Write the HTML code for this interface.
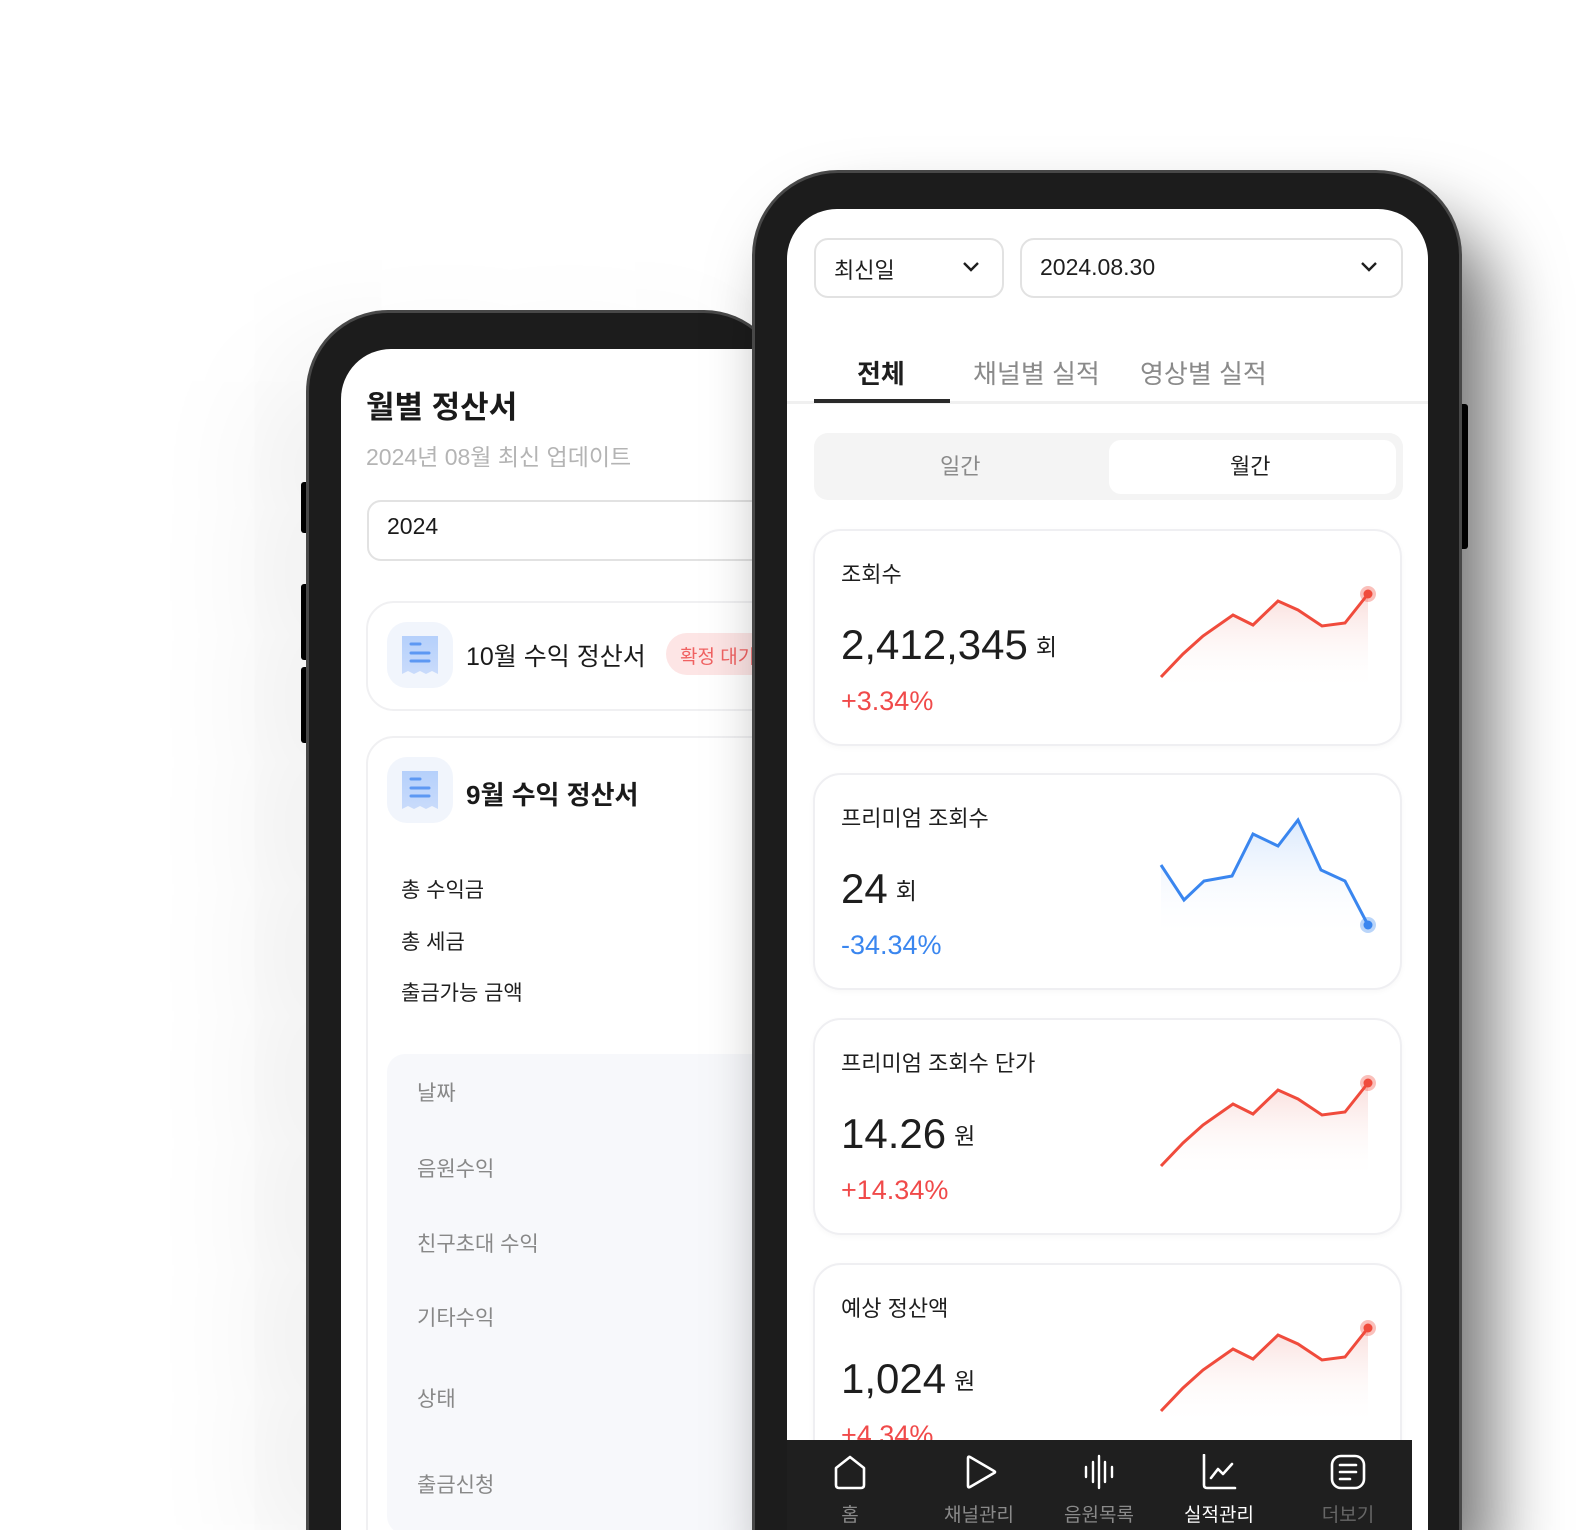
<!DOCTYPE html>
<html><head><meta charset="utf-8"><style>
*{box-sizing:border-box;margin:0;padding:0}
html{width:1585px;height:1530px;overflow:hidden}
body{width:1585px;height:1530px;overflow:hidden;background:#fff;position:relative;font-family:"Liberation Sans","Noto Sans CJK KR",sans-serif;color:#1e1e1e}
.abs{position:absolute}
.frame{position:absolute;background:#1c1c1c;border:3px solid #484848;border-bottom:0}
.scr{position:absolute;background:#fff;overflow:hidden}
.btn{position:absolute;background:#000;border-radius:3px}
.card{position:absolute;left:26px;width:589px;height:217px;border:2px solid #efeff2;border-radius:28px;background:#fff;box-shadow:0 2px 6px rgba(0,0,0,.03)}
.card .t{position:absolute;left:26px;top:26px;font-size:22px;color:#1e1e1e}
.card .v{position:absolute;left:26px;top:90px;font-size:42px;color:#1e1e1e;white-space:nowrap}
.card .v span{font-size:23px;margin-left:8px;vertical-align:4px}
.card .p{position:absolute;left:26px;top:155px;font-size:27px}
.card svg{position:absolute;left:0;top:0;overflow:visible}
.red{color:#f04a4a}.blue{color:#3a86ef}
.nav{position:absolute;top:1231px;left:0;width:625px;height:90px;background:#1f1f1f}
.ni{position:absolute;top:0;width:100px;text-align:center}
.ni svg{position:absolute;left:32px;top:14px}
.ni div{position:absolute;top:60px;width:100%;font-size:19px;color:#8a8a8a}
.lst{position:absolute;left:30px;font-size:21px;color:#888}
.clip{position:absolute;left:0;top:0;width:1585px;height:1530px;overflow:hidden}
</style></head><body><div class="clip">

<!-- LEFT PHONE -->
<div class="btn" style="left:301px;top:482px;width:8px;height:51px"></div>
<div class="btn" style="left:301px;top:584px;width:8px;height:76px"></div>
<div class="btn" style="left:301px;top:667px;width:8px;height:76px"></div>
<div class="frame" style="left:306px;top:310px;width:480px;height:1220px;border-radius:82px 82px 0 0;box-shadow:-40px 40px 120px rgba(0,0,0,.08)"></div>
<div class="scr" style="left:341px;top:349px;width:440px;height:1181px;border-radius:50px 0 0 0">
  <div class="abs" style="left:25px;top:33px;font-size:31px;font-weight:bold;color:#1a1a1a">월별 정산서</div>
  <div class="abs" style="left:25px;top:89px;font-size:23px;color:#b4b4b4">2024년 08월 최신 업데이트</div>
  <div class="abs" style="left:26px;top:151px;width:420px;height:61px;border:2px solid #e2e2e2;border-radius:14px"></div>
  <div class="abs" style="left:46px;top:164px;font-size:23px;color:#1a1a1a">2024</div>
  <div class="abs" style="left:25px;top:252px;width:440px;height:110px;border:2px solid #f0f0f2;border-radius:28px"></div>
  <div class="abs" style="left:46px;top:273px;width:66px;height:66px;border-radius:20px;background:#f1f5fc">
    <svg width="66" height="66"><defs><linearGradient id="rg" x1="0" y1="0" x2="0" y2="1"><stop offset="0" stop-color="#b5d0fb"/><stop offset="1" stop-color="#c9dbfb"/></linearGradient></defs>
    <path d="M15 14h36v38l-6-3-6 3-6-3-6 3-6-3-6 3z" fill="url(#rg)"/>
    <path d="M24 22h9M24 31h18M24 39h18" stroke="#5d98f3" stroke-width="3" stroke-linecap="round"/></svg>
  </div>
  <div class="abs" style="left:125px;top:288px;font-size:25px;color:#1a1a1a">10월 수익 정산서</div>
  <div class="abs" style="left:325px;top:284px;width:120px;height:42px;border-radius:21px;background:#fde5e5;color:#f06262;font-size:19px;padding:9px 0 0 14px">확정 대기</div>
  <div class="abs" style="left:25px;top:387px;width:440px;height:1000px;border:2px solid #f0f0f2;border-radius:28px"></div>
  <div class="abs" style="left:46px;top:408px;width:66px;height:66px;border-radius:20px;background:#f1f5fc">
    <svg width="66" height="66"><path d="M15 14h36v38l-6-3-6 3-6-3-6 3-6-3-6 3z" fill="url(#rg)"/>
    <path d="M24 22h9M24 31h18M24 39h18" stroke="#5d98f3" stroke-width="3" stroke-linecap="round"/></svg>
  </div>
  <div class="abs" style="left:125px;top:426px;font-size:26px;font-weight:bold;color:#1a1a1a">9월 수익 정산서</div>
  <div class="abs" style="left:60px;top:525px;font-size:21px">총 수익금</div>
  <div class="abs" style="left:60px;top:577px;font-size:21px">총 세금</div>
  <div class="abs" style="left:60px;top:628px;font-size:21px">출금가능 금액</div>
  <div class="abs" style="left:46px;top:705px;width:420px;height:480px;background:#f7f8fb;border-radius:18px">
    <div class="lst" style="top:23px">날짜</div>
    <div class="lst" style="top:99px">음원수익</div>
    <div class="lst" style="top:174px">친구초대 수익</div>
    <div class="lst" style="top:248px">기타수익</div>
    <div class="lst" style="top:329px">상태</div>
    <div class="lst" style="top:415px">출금신청</div>
  </div>
</div>

<!-- RIGHT PHONE -->
<div class="btn" style="left:1459px;top:404px;width:9px;height:145px"></div>
<div class="frame" style="left:752px;top:170px;width:710px;height:1360px;border-radius:86px 86px 0 0;box-shadow:30px 50px 70px rgba(0,0,0,.55)"></div>
<div class="scr" style="left:787px;top:209px;width:641px;height:1321px;border-radius:50px 50px 0 0">
  <div class="abs" style="left:27px;top:29px;width:190px;height:60px;border:2px solid #e2e2e2;border-radius:14px"></div>
  <div class="abs" style="left:47px;top:44px;font-size:22px">최신일</div>
  <svg class="abs" style="left:174px;top:50px" width="20" height="16"><path d="M3 4l7 7 7-7" fill="none" stroke="#1e1e1e" stroke-width="2.4"/></svg>
  <div class="abs" style="left:233px;top:29px;width:383px;height:60px;border:2px solid #e2e2e2;border-radius:14px"></div>
  <div class="abs" style="left:253px;top:45px;font-size:23px">2024.08.30</div>
  <svg class="abs" style="left:572px;top:50px" width="20" height="16"><path d="M3 4l7 7 7-7" fill="none" stroke="#1e1e1e" stroke-width="2.4"/></svg>

  <div class="abs" style="left:0;top:192px;width:641px;height:3px;background:#f0f0f0"></div>
  <div class="abs" style="left:27px;top:190px;width:136px;height:4px;background:#2a2a2a"></div>
  <div class="abs" style="left:70px;top:145px;font-size:26px;font-weight:bold">전체</div>
  <div class="abs" style="left:186px;top:145px;font-size:26px;color:#8a8a8a">채널별 실적</div>
  <div class="abs" style="left:353px;top:145px;font-size:26px;color:#8a8a8a">영상별 실적</div>

  <div class="abs" style="left:27px;top:224px;width:589px;height:67px;background:#f4f4f4;border-radius:14px"></div>
  <div class="abs" style="left:322px;top:231px;width:287px;height:54px;background:#fff;border-radius:12px"></div>
  <div class="abs" style="left:153px;top:240px;font-size:22px;color:#8a8a8a">일간</div>
  <div class="abs" style="left:443px;top:240px;font-size:22px;color:#1e1e1e">월간</div>

  <svg width="0" height="0" style="position:absolute"><defs>
    <linearGradient id="fr" x1="0" y1="0" x2="0" y2="1"><stop offset="0" stop-color="#f8d5d2" stop-opacity=".8"/><stop offset="1" stop-color="#fff" stop-opacity="0"/></linearGradient>
    <linearGradient id="fb" x1="0" y1="0" x2="0" y2="1"><stop offset="0" stop-color="#d6e6fc" stop-opacity=".9"/><stop offset="1" stop-color="#fff" stop-opacity="0"/></linearGradient>
  </defs></svg>

  <div class="card" style="top:320px">
    <div class="t">조회수</div>
    <div class="v">2,412,345<span>회</span></div>
    <div class="p red">+3.34%</div>
    <svg width="600" height="220"><path d="M346 146L368 123L388 105L418 84L438 94L463 70L483 79L507 95L530 92L553 63V160H346Z" fill="url(#fr)"/><path d="M346 146L368 123L388 105L418 84L438 94L463 70L483 79L507 95L530 92L553 63" fill="none" stroke="#f04b3c" stroke-width="3"/><circle cx="553" cy="63" r="8" fill="#f04b3c" opacity=".35"/><circle cx="553" cy="63" r="4.5" fill="#f04b3c"/></svg>
  </div>
  <div class="card" style="top:564px">
    <div class="t">프리미엄 조회수</div>
    <div class="v">24<span>회</span></div>
    <div class="p blue">-34.34%</div>
    <svg width="600" height="220"><path d="M346 90L369 125L389 106L417 101L438 59L463 71L483 45L506 95L530 106L553 150V165H346Z" fill="url(#fb)"/><path d="M346 90L369 125L389 106L417 101L438 59L463 71L483 45L506 95L530 106L553 150" fill="none" stroke="#3a86ef" stroke-width="3"/><circle cx="553" cy="150" r="8" fill="#3a86ef" opacity=".35"/><circle cx="553" cy="150" r="4.5" fill="#3a86ef"/></svg>
  </div>
  <div class="card" style="top:809px">
    <div class="t">프리미엄 조회수 단가</div>
    <div class="v">14.26<span>원</span></div>
    <div class="p red">+14.34%</div>
    <svg width="600" height="220"><path d="M346 146L368 123L388 105L418 84L438 94L463 70L483 79L507 95L530 92L553 63V160H346Z" fill="url(#fr)"/><path d="M346 146L368 123L388 105L418 84L438 94L463 70L483 79L507 95L530 92L553 63" fill="none" stroke="#f04b3c" stroke-width="3"/><circle cx="553" cy="63" r="8" fill="#f04b3c" opacity=".35"/><circle cx="553" cy="63" r="4.5" fill="#f04b3c"/></svg>
  </div>
  <div class="card" style="top:1054px">
    <div class="t">예상 정산액</div>
    <div class="v">1,024<span>원</span></div>
    <div class="p red">+4.34%</div>
    <svg width="600" height="220"><path d="M346 146L368 123L388 105L418 84L438 94L463 70L483 79L507 95L530 92L553 63V160H346Z" fill="url(#fr)"/><path d="M346 146L368 123L388 105L418 84L438 94L463 70L483 79L507 95L530 92L553 63" fill="none" stroke="#f04b3c" stroke-width="3"/><circle cx="553" cy="63" r="8" fill="#f04b3c" opacity=".35"/><circle cx="553" cy="63" r="4.5" fill="#f04b3c"/></svg>
  </div>

  <div class="nav">
    <div class="ni" style="left:13px"><svg width="36" height="36"><path d="M4 14L18 3L32 14V31Q32 34 29 34H7Q4 34 4 31Z" fill="none" stroke="#fff" stroke-width="2.6" stroke-linejoin="round"/></svg><div>홈</div></div>
    <div class="ni" style="left:142px"><svg width="36" height="36"><path d="M7 4Q7 2 9 3L33 17Q35 18 33 19L9 33Q7 34 7 32Z" fill="none" stroke="#fff" stroke-width="2.6" stroke-linejoin="round"/></svg><div>채널관리</div></div>
    <div class="ni" style="left:262px"><svg width="36" height="36"><path d="M5 13V23M12 8V28M18 2V34M24 8V28M31 13V23" stroke="#fff" stroke-width="2.4" stroke-linecap="round"/></svg><div>음원목록</div></div>
    <div class="ni" style="left:382px"><svg width="36" height="36"><path d="M3 1V31Q3 34 6 34H34" fill="none" stroke="#fff" stroke-width="2.6" stroke-linecap="round"/><path d="M10 24L17 15L22 20L31 10" fill="none" stroke="#fff" stroke-width="2.6" stroke-linecap="round" stroke-linejoin="round"/></svg><div style="color:#fff">실적관리</div></div>
    <div class="ni" style="left:511px"><svg width="36" height="36"><rect x="2" y="2" width="32" height="32" rx="9" fill="none" stroke="#fff" stroke-width="2.6"/><path d="M10 11H26M10 18H26M10 25H20" stroke="#fff" stroke-width="2.6" stroke-linecap="round"/></svg><div style="color:#666">더보기</div></div>
  </div>
</div>
</div></body></html>
